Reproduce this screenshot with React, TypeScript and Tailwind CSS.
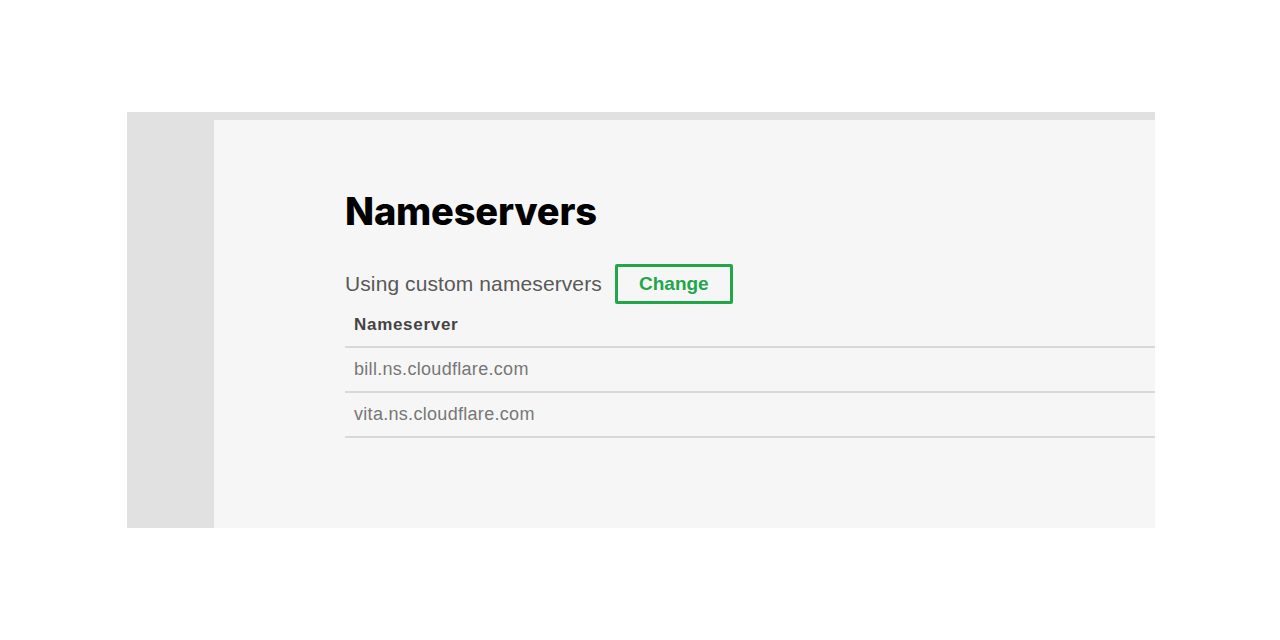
export default function App() {
  const servers = ['bill.ns.cloudflare.com', 'vita.ns.cloudflare.com'];

  return (
    <div className="w-full h-[640px] bg-white pt-[112px] pl-[127px]" style={{ fontFamily: '"Liberation Sans", Arial, sans-serif' }}>
      <div className="w-[1028px] h-[416px] bg-[#e1e1e1] pt-2 pl-[87px] flex">
        <div className="flex-1 bg-[#f6f6f6] pl-[131px] pt-[72px]">
          <h1
            className="text-[38px] font-extrabold text-black leading-none tracking-[-0.2px]"
            style={{ fontFamily: 'Inter, "Liberation Sans", sans-serif' }}
          >
            Nameservers
          </h1>

          <div className="flex items-center mt-[34px]">
            <span className="text-[21px] text-[#595959] tracking-[0.1px]">Using custom nameservers</span>
            <button className="ml-[13px] w-[118px] h-[40px] border-[3px] border-[#22a64a] text-[#22a64a] font-bold text-[19px] rounded-[2px] bg-transparent">
              Change
            </button>
          </div>

          <div>
            <div className="h-[44px] flex items-center pl-[9px] text-[17px] font-bold text-[#444] tracking-[0.7px] border-b-2 border-[#d8d8d8]">
              Nameserver
            </div>
            {servers.map(s => (
              <div
                key={s}
                className="h-[45px] flex items-center pl-[9px] text-[18px] text-[#777] tracking-[0.3px] border-b-2 border-[#d8d8d8]"
              >
                {s}
              </div>
            ))}
          </div>
        </div>
      </div>
    </div>
  );
}
